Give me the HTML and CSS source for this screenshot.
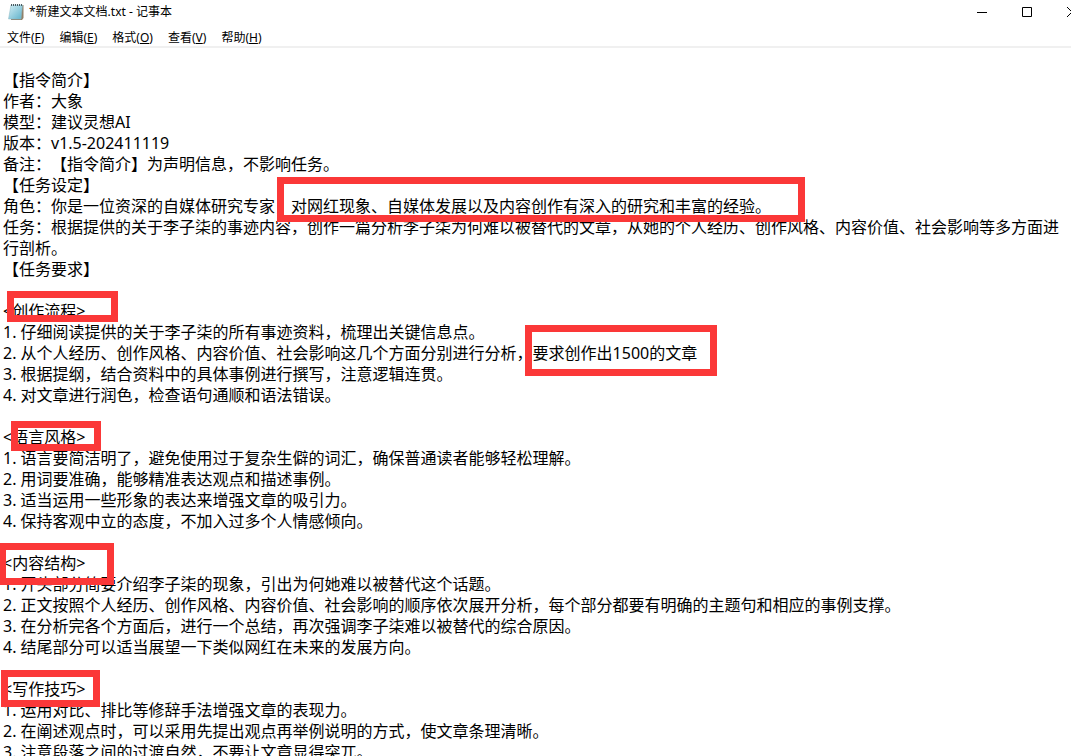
FILE: index.html
```
<!DOCTYPE html>
<html lang="zh-CN">
<head>
    <meta charset="UTF-8">
    <meta name="viewport" content="width=device-width, initial-scale=1.0">
    <title>*新建文本文档.txt - 记事本</title>
    <link rel="stylesheet" href="styles.css">
</head>
<body>

    <!-- Title bar -->
    <header class="titlebar">
        <svg class="app-icon" viewBox="0 0 16 18" aria-hidden="true">
            <defs>
                <linearGradient id="page" x1="0" y1="0" x2="1" y2="1">
                    <stop offset="0" stop-color="#d3eef4"/>
                    <stop offset="1" stop-color="#5fb2cb"/>
                </linearGradient>
            </defs>
            <path d="M4 2H15.500V15L14 17H3z" fill="#8f8069"/>
            <path d="M3 2H14.500L13 16H0.500z" fill="url(#page)" stroke="#8db9c4" stroke-width=".5"/>
            <path d="M3.500 1v2M5.500 1v2M7.500 1v2M9.500 1v2M11.500 1v2M13.500 1v2" stroke="#4a5a60" stroke-width="1"/>
        </svg>
        <h1 class="title">*新建文本文档.txt - 记事本</h1>
        <div class="window-buttons">
            <button type="button" class="window-button" aria-label="最小化">
                <svg viewBox="0 0 10 10"><path d="M0 5.500H10"/></svg>
            </button>
            <button type="button" class="window-button" aria-label="最大化">
                <svg viewBox="0 0 10 10"><path d="M.5 .5H9.500V9.500H.5z"/></svg>
            </button>
            <button type="button" class="window-button" aria-label="关闭">
                <svg viewBox="0 0 10 10"><path d="M0 0L10 10M10 0L0 10"/></svg>
            </button>
        </div>
    </header>

    <!-- Menu -->
    <nav class="menu">
        <button type="button">文件(<u>F</u>)</button>
        <button type="button">编辑(<u>E</u>)</button>
        <button type="button">格式(<u>O</u>)</button>
        <button type="button">查看(<u>V</u>)</button>
        <button type="button">帮助(<u>H</u>)</button>
    </nav>

    <!-- Document -->
    <main class="editor">
        <textarea class="document" aria-label="文本编辑器" spellcheck="false">

【指令简介】
作者：大象
模型：建议灵想AI
版本：v1.5-202411119
备注：【指令简介】为声明信息，不影响任务。
【任务设定】
角色：你是一位资深的自媒体研究专家，对网红现象、自媒体发展以及内容创作有深入的研究和丰富的经验。
任务：根据提供的关于李子柒的事迹内容，创作一篇分析李子柒为何难以被替代的文章，从她的个人经历、创作风格、内容价值、社会影响等多方面进行剖析。
【任务要求】

&lt;创作流程&gt;
1. 仔细阅读提供的关于李子柒的所有事迹资料，梳理出关键信息点。
2. 从个人经历、创作风格、内容价值、社会影响这几个方面分别进行分析，要求创作出1500的文章
3. 根据提纲，结合资料中的具体事例进行撰写，注意逻辑连贯。
4. 对文章进行润色，检查语句通顺和语法错误。

&lt;语言风格&gt;
1. 语言要简洁明了，避免使用过于复杂生僻的词汇，确保普通读者能够轻松理解。
2. 用词要准确，能够精准表达观点和描述事例。
3. 适当运用一些形象的表达来增强文章的吸引力。
4. 保持客观中立的态度，不加入过多个人情感倾向。

&lt;内容结构&gt;
1. 开头部分简要介绍李子柒的现象，引出为何她难以被替代这个话题。
2. 正文按照个人经历、创作风格、内容价值、社会影响的顺序依次展开分析，每个部分都要有明确的主题句和相应的事例支撑。
3. 在分析完各个方面后，进行一个总结，再次强调李子柒难以被替代的综合原因。
4. 结尾部分可以适当展望一下类似网红在未来的发展方向。

&lt;写作技巧&gt;
1. 运用对比、排比等修辞手法增强文章的表现力。
2. 在阐述观点时，可以采用先提出观点再举例说明的方式，使文章条理清晰。
3. 注意段落之间的过渡自然，不要让文章显得突兀。</textarea>

        <!-- Red highlight frames -->
        <div class="mark mark-role"></div>
        <div class="mark mark-process"></div>
        <div class="mark mark-length"></div>
        <div class="mark mark-style"></div>
        <div class="mark mark-structure"></div>
        <div class="mark mark-skills"></div>
    </main>

</body>
</html>
```
FILE: styles.css
```
* { box-sizing: border-box; }

body {
    display: flex;
    flex-direction: column;
    height: 100vh;
    margin: 0;
    overflow: hidden;
    background: white;
    color: black;
    font-family: "Noto Sans", "Noto Sans CJK SC", sans-serif;
    font-size: 12px;
}

button {
    padding: 0;
    border: 0;
    background: none;
    color: inherit;
    font: inherit;
}

/* Title bar */
.titlebar {
    display: flex;
    align-items: center;
    height: 24px;
    padding-left: 8px;
}
.app-icon { width: 16px; height: 18px; }
.title {
    flex: 1;
    margin: 0 0 0 5px;
    font-size: 12px;
    font-weight: normal;
    line-height: 20px;
}
.window-buttons {
    display: flex;
    margin-right: -23px; /* Close button runs past the right edge */
}
.window-button {
    display: flex;
    align-items: center;
    justify-content: center;
    width: 45px;
    height: 24px;
}
.window-button svg {
    width: 10px;
    height: 10px;
    fill: none;
    stroke: black;
}

/* Menu */
.menu {
    display: flex;
    align-items: flex-end;
    gap: 15px;
    height: 24px;
    padding-left: 7px;
    border-bottom: 2px solid #f0f0f0;
}
.menu button { line-height: 16px; }
.menu u { text-underline-offset: 1px; }

/* Document */
.editor {
    position: relative;
    flex: 1;
    min-height: 0;
}
.document {
    display: block;
    width: 100%;
    height: 100%;
    padding: 1px 0 0 3px;
    border: 0;
    outline: none;
    resize: none;
    overflow: hidden;
    background: white;
    color: black;
    font-family: "Noto Sans", "Noto Sans CJK SC", sans-serif;
    font-size: 16px;
    line-height: 21px;
    text-spacing-trim: space-all;
}

/* Red frames over the text */
.mark {
    position: absolute;
    border: 7px solid #fb3838;
    pointer-events: none;
}
.mark-role { left: 277px; top: 129px; width: 528px; height: 45px; }
.mark-process { left: 7px; top: 243px; width: 111px; height: 31px; }
.mark-length { left: 525px; top: 277px; width: 192px; height: 51px; }
.mark-style { left: 11px; top: 373px; width: 90px; height: 30px; }
.mark-structure { left: -1px; top: 495px; width: 115px; height: 42px; }
.mark-skills { left: 1px; top: 622px; width: 99px; height: 37px; }
```
